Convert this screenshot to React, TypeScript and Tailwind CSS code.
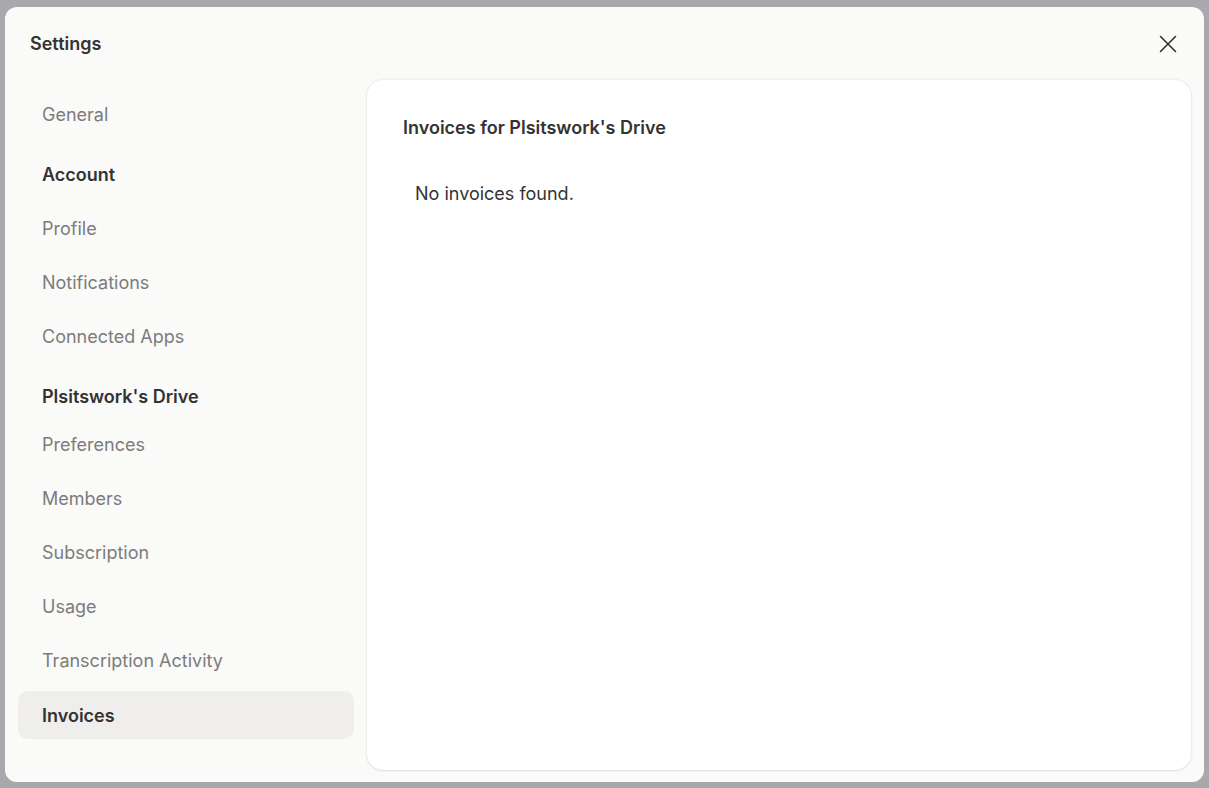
import React from 'react';

type NavItem = { label: string; heading?: boolean; active?: boolean; tight?: boolean };

const items: NavItem[] = [
  { label: 'General' },
  { label: 'Account', heading: true },
  { label: 'Profile' },
  { label: 'Notifications' },
  { label: 'Connected Apps' },
  { label: "Plsitswork's Drive", heading: true, tight: true },
  { label: 'Preferences' },
  { label: 'Members' },
  { label: 'Subscription' },
  { label: 'Usage' },
  { label: 'Transcription Activity' },
  { label: 'Invoices', active: true },
];

const CloseIcon = () => (
  <svg width="20" height="20" viewBox="0 0 20 20" fill="none" stroke="#2b2b2b" strokeWidth="1.5" strokeLinecap="round">
    <path d="M2.5 2.5 L17.5 17.5 M17.5 2.5 L2.5 17.5" />
  </svg>
);

const App: React.FC = () => {
  return (
    <div
      className="w-[1209px] h-[788px] bg-[#a9a8ad] flex pt-[7px] pl-[5px] pr-[5px] pb-[6px] overflow-hidden"
      style={{ fontFamily: 'Inter, "Noto Sans", sans-serif' }}
    >
      <div className="flex-1 bg-[#fafaf9] rounded-[12px] flex flex-col">
        {/* header */}
        <div className="h-[73px] flex items-center justify-between pl-[25px] pr-[24px]">
          <h2 className="text-[18px] font-semibold text-[#333333]">Settings</h2>
          <button className="w-[24px] h-[24px] flex items-center justify-center">
            <CloseIcon />
          </button>
        </div>

        <div className="flex-1 flex pl-[13px] pr-[13px] pb-[12px] gap-[13px] min-h-0">
          {/* sidebar */}
          <nav className="w-[336px] flex flex-col gap-[6px] pt-[10px]">
            {items.map((it) => (
              <div
                key={it.label}
                className={
                  'h-[48px] flex items-center pl-[24px] rounded-[10px] text-[18px] ' +
                  (it.heading
                    ? 'font-semibold text-[#333333] mt-[6px] '
                    : it.active
                    ? 'font-semibold text-[#333333] bg-[#efeeec] mt-[1px] '
                    : 'text-[#7c7c7c] ') +
                  (it.tight ? 'mb-[-6px]' : '')
                }
              >
                {it.label}
              </div>
            ))}
          </nav>

          {/* content card */}
          <main className="flex-1 bg-white rounded-[16px] shadow-[0_0_3px_rgba(0,0,0,0.12),0_1px_2px_rgba(0,0,0,0.06)] pl-[36px] pt-[36px]">
            <h3 className="text-[18px] font-semibold text-[#333333] leading-[24px]">
              Invoices for Plsitswork's Drive
            </h3>
            <p className="mt-[42px] ml-[12px] text-[18px] text-[#333333] leading-[24px]">No invoices found.</p>
          </main>
        </div>
      </div>
    </div>
  );
};

export default App;
